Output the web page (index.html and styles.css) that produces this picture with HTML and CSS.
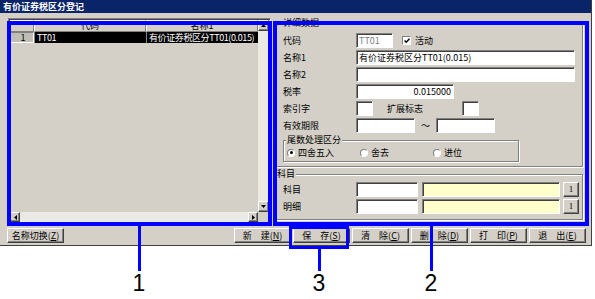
FILE: index.html
```html
<!DOCTYPE html>
<html lang="zh-CN">
<head>
  <meta charset="UTF-8" />
  <title>有价证券税区分登记</title>
  <link rel="stylesheet" href="styles.css">
</head>
<body>
<div class="screen">
  <div class="window">
    <div class="titlebar">有价证券税区分登记</div>

    <div class="main">
      <!-- list grid -->
      <div class="grid">
        <div class="grid-body">
          <div class="table">
            <div class="tr th">
              <div class="cell"></div>
              <div class="cell">代码</div>
              <div class="cell">名称1</div>
            </div>
            <div class="tr selected">
              <div class="cell rowhead">1</div>
              <div class="cell">TT01</div>
              <div class="cell">有价证券税区分TT01(0.015)</div>
            </div>
          </div>
          <div class="vscroll">
            <div class="sbtn"><svg width="5" height="3" viewBox="0 0 5 3"><path d="M2.5 0L5 3H0z"/></svg></div>
            <div class="track"></div>
            <div class="sbtn"><svg width="5" height="3" viewBox="0 0 5 3"><path d="M0 0H5L2.5 3z"/></svg></div>
          </div>
        </div>
        <div class="hscroll-row">
          <div class="hscroll">
            <div class="sbtn"><svg width="3" height="5" viewBox="0 0 3 5"><path d="M3 0V5L0 2.5z"/></svg></div>
            <div class="track"></div>
            <div class="sbtn"><svg width="3" height="5" viewBox="0 0 3 5"><path d="M0 0L3 2.5L0 5z"/></svg></div>
          </div>
          <div class="corner"></div>
        </div>
      </div>

      <!-- detail form -->
      <div class="detail">
        <fieldset class="group detail-group">
          <legend>详细数据</legend>
          <div class="row">
            <span class="lbl">代码</span>
            <span class="field w-code disabled">TT01</span>
            <span class="check"><svg width="6" height="6" viewBox="0 0 6 6"><path d="M0.5 2.5L2.2 4.3L5.5 0.8" fill="none" stroke="#000" stroke-width="1.4"/></svg></span>
            <span>活动</span>
          </div>
          <div class="row">
            <span class="lbl">名称1</span>
            <span class="field w-name">有价证券税区分TT01(0.015)</span>
          </div>
          <div class="row">
            <span class="lbl">名称2</span>
            <span class="field w-name"></span>
          </div>
          <div class="row">
            <span class="lbl">税率</span>
            <span class="field w-rate num">0.015000</span>
          </div>
          <div class="row">
            <span class="lbl">索引字</span>
            <span class="field w-tiny"></span>
            <span class="lbl-ext">扩展标志</span>
            <span class="field w-tiny"></span>
          </div>
          <div class="row">
            <span class="lbl">有效期限</span>
            <span class="field w-date"></span>
            <span class="tilde">～</span>
            <span class="field w-date"></span>
          </div>
          <fieldset class="group round-group">
            <legend>尾数处理区分</legend>
            <div class="radios">
              <span class="opt"><span class="radio on"></span>四舍五入</span>
              <span class="opt"><span class="radio"></span>舍去</span>
              <span class="opt"><span class="radio"></span>进位</span>
            </div>
          </fieldset>
        </fieldset>

        <fieldset class="group subject-group">
          <legend>科目</legend>
          <div class="row">
            <span class="lbl">科目</span>
            <span class="field w-subj"></span>
            <span class="field w-subj-name yellow"></span>
            <span class="pick">1</span>
          </div>
          <div class="row">
            <span class="lbl">明细</span>
            <span class="field w-subj"></span>
            <span class="field w-subj-name yellow"></span>
            <span class="pick">1</span>
          </div>
        </fieldset>
      </div>
    </div>

    <div class="actions">
      <button class="btn">名称切换(<u>Z</u>)</button>
      <div class="btn-group">
        <button class="btn">新&#12288;建(<u>N</u>)</button>
        <button class="btn">保&#12288;存(<u>S</u>)</button>
        <button class="btn">清&#12288;除(<u>C</u>)</button>
        <button class="btn">删&#12288;除(<u>D</u>)</button>
        <button class="btn">打&#12288;印(<u>P</u>)</button>
        <button class="btn">退&#12288;出(<u>E</u>)</button>
      </div>
    </div>
  </div>

  <!-- annotation callouts -->
  <div class="box box-1"></div>
  <div class="box box-2"></div>
  <div class="box box-3"></div>
  <div class="line line-1"></div>
  <div class="line line-3"></div>
  <div class="line line-2"></div>
  <div class="num-label n-1">1</div>
  <div class="num-label n-3">3</div>
  <div class="num-label n-2">2</div>
</div>
</body>
</html>
```

FILE: styles.css
```css
* {
  box-sizing: border-box;
}

body {
  margin: 0;
  background: #fff;
  font-family: "Noto Sans CJK SC", "DejaVu Sans", sans-serif;
  font-size: 9px;
  color: #000;
}

.screen {
  position: relative;
  width: 595px;
  height: 299px;
}

.window {
  width: 592px;
  height: 246px;
  background: #d4d0c8;
  border-right: 1px solid #404040;
  border-bottom: 1px solid #404040;
}

.titlebar {
  height: 13px;
  background: #0a246a;
  color: #fff;
  font-weight: bold;
  line-height: 13px;
  padding-left: 3px;
}

.main {
  display: flex;
  height: 211px;
  padding: 5px 0 0 8px;
}

/* grid */
.grid {
  width: 263px;
  height: 206px;
  padding: 1px;
  border: 1px solid;
  border-color: #808080 #fff #fff #808080;
  box-shadow: inset 1px 1px #404040;
  display: flex;
  flex-direction: column;
}

.grid-body {
  flex: 1;
  display: flex;
}

.table {
  flex: 1;
}

.tr {
  display: grid;
  grid-template-columns: 24px 112px 1fr;
}

.th {
  height: 12px;
}

.th .cell {
  border: 1px solid;
  border-color: #fff #808080 #808080 #fff;
  text-align: center;
  line-height: 10px;
}

.selected {
  height: 11px;
  line-height: 11px;
}

.selected .cell {
  background: #000;
  color: #fff;
  padding-left: 2px;
  border-left: 1px solid #808080;
  white-space: nowrap;
  overflow: hidden;
  letter-spacing: -0.4px;
}

.selected .rowhead {
  background: #c0bdb5;
  color: #000;
  text-align: center;
  border: 1px solid;
  border-color: #808080 #fff #fff #808080;
  line-height: 9px;
  letter-spacing: 0;
}

.vscroll {
  width: 11px;
  display: flex;
  flex-direction: column;
}

.hscroll-row {
  height: 10px;
  display: flex;
}

.hscroll {
  flex: 1;
  display: flex;
}

.corner {
  width: 11px;
}

.track {
  flex: 1;
  background: #ebe9e4;
}

.sbtn {
  width: 11px;
  height: 11px;
  background: #d4d0c8;
  border: 1px solid;
  border-color: #fff #404040 #404040 #fff;
  box-shadow: inset -1px -1px #808080;
  display: flex;
  align-items: center;
  justify-content: center;
}

.hscroll .sbtn {
  width: 10px;
  height: 10px;
}

/* detail form */
.detail {
  width: 308px;
  height: 204px;
  margin-left: 4px;
}

.group {
  margin: 0;
  border: 1px solid #808080;
  box-shadow: inset 1px 1px #fff, 1px 1px #fff;
}

.group legend {
  background: #d4d0c8;
  line-height: 10px;
  padding: 0 1px;
  margin-left: -1px;
}

.detail-group {
  padding: 5px 0 4px 7px;
}

.row {
  display: flex;
  align-items: center;
  height: 15px;
  margin-bottom: 2px;
}

.lbl {
  width: 73px;
}

.field {
  height: 15px;
  background: #fff;
  border: 1px solid;
  border-color: #808080 #fff #fff #808080;
  box-shadow: inset 1px 1px #404040;
  padding: 0 2px;
  line-height: 13px;
  white-space: nowrap;
}

.disabled {
  color: #808080;
}

.yellow {
  background: #ffffcc;
}

.num {
  text-align: right;
}

.w-code { width: 37px; }
.w-name { width: 219px; }
.w-rate { width: 98px; }
.w-tiny { width: 17px; }
.w-date { width: 59px; }
.w-subj { width: 62px; }
.w-subj-name { width: 138px; margin-left: 4px; }

.check {
  width: 9px;
  height: 9px;
  margin: 0 4px 0 9px;
  background: #fff;
  border: 1px solid;
  border-color: #808080 #fff #fff #808080;
  display: flex;
  align-items: center;
  justify-content: center;
}

.lbl-ext {
  width: 89px;
  padding-left: 14px;
}

.tilde {
  width: 21px;
  text-align: center;
}

.round-group {
  width: 236px;
  margin-top: 2px;
  padding: 2px 0 3px 3px;
}

.radios {
  display: flex;
  height: 11px;
  align-items: center;
}

.opt {
  width: 73px;
  display: flex;
  align-items: center;
}

.radio {
  width: 8px;
  height: 8px;
  margin-right: 3px;
  border-radius: 50%;
  background: #fff;
  border: 1px solid;
  border-color: #808080 #fff #fff #808080;
  display: flex;
  align-items: center;
  justify-content: center;
}

.radio.on::after {
  content: "";
  width: 3px;
  height: 3px;
  border-radius: 50%;
  background: #000;
}

.subject-group {
  margin-top: 2px;
  height: 51px;
  padding: 3px 0 0 7px;
}

.subject-group legend {
  margin-left: -7px;
}

.pick {
  width: 16px;
  height: 15px;
  margin-left: 3px;
  border: 1px solid;
  border-color: #fff #404040 #404040 #fff;
  box-shadow: inset -1px -1px #808080;
  text-align: center;
  line-height: 12px;
  font-family: "Liberation Serif", serif;
}

/* buttons */
.actions {
  display: flex;
  padding: 4px 5px 0 7px;
}

.btn {
  width: 57px;
  height: 15px;
  padding: 0;
  font: inherit;
  line-height: 12px;
  color: #000;
  background: #d4d0c8;
  border: 1px solid;
  border-color: #fff #404040 #404040 #fff;
  box-shadow: inset -1px -1px #808080;
}

.btn-group {
  margin-left: auto;
  display: flex;
  gap: 2px;
}

/* annotations */
.box {
  position: absolute;
  border: 4px solid #0000ff;
}

.box-1 { left: 7px; top: 21px; width: 265px; height: 205px; }
.box-2 { left: 273px; top: 21px; width: 316px; height: 205px; }
.box-3 { left: 289px; top: 226px; width: 60px; height: 23px; border-width: 3px; }

.line {
  position: absolute;
  width: 3px;
  background: #0000ff;
}

.line-1 { left: 138px; top: 226px; height: 45px; }
.line-3 { left: 318px; top: 249px; height: 22px; }
.line-2 { left: 430px; top: 226px; height: 45px; }

.num-label {
  position: absolute;
  top: 272px;
  width: 20px;
  text-align: center;
  font-family: "Liberation Sans", Arial, sans-serif;
  font-size: 23px;
  line-height: 23px;
}

.n-1 { left: 129px; }
.n-3 { left: 309px; }
.n-2 { left: 421px; }
```
